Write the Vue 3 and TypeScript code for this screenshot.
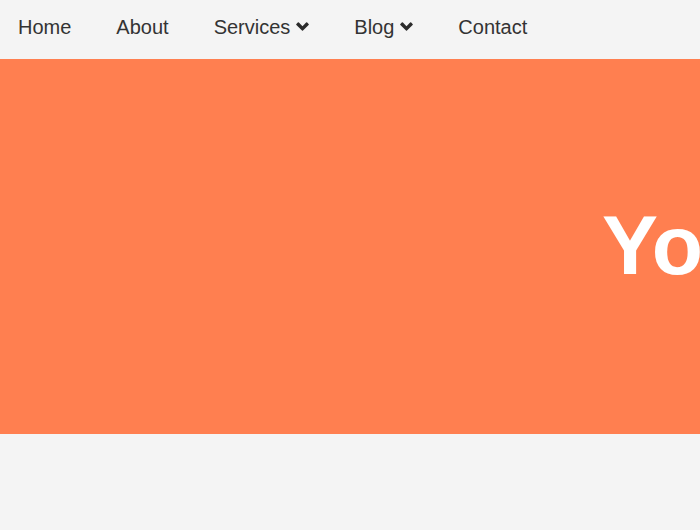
<script setup lang="ts">
interface NavItem {
  label: string
  hasMenu: boolean
}

const items: NavItem[] = [
  { label: 'Home', hasMenu: false },
  { label: 'About', hasMenu: false },
  { label: 'Services', hasMenu: true },
  { label: 'Blog', hasMenu: true },
  { label: 'Contact', hasMenu: false },
]
</script>

<template>
  <nav class="nav">
    <a v-for="item in items" :key="item.label" class="link" href="#">
      {{ item.label }}
      <svg v-if="item.hasMenu" class="chevron" viewBox="0 1 13 16" aria-hidden="true">
        <path d="M6 11.6.4 6a.8.8 0 0 1 0-1.1l1.4-1.4a.8.8 0 0 1 1.1 0L6.5 7.200l3.600-3.700a.8.8 0 0 1 1.100 0l1.400 1.400a.8.8 0 0 1 0 1.100L7 11.600a.8.8 0 0 1-1 0z" />
      </svg>
    </a>
  </nav>
  <header class="hero">
    <h1 class="title">Yo</h1>
  </header>
</template>

<style>
body {
  margin: 0;
  background: #f4f4f4;
}
</style>

<style scoped>
.nav {
  display: flex;
  gap: 45px;
  padding: 16px 18px 20px;
  font-family: "Liberation Sans", Arial, sans-serif;
  font-size: 20px;
  line-height: 23px;
}

.link {
  display: flex;
  align-items: center;
  gap: 6px;
  color: #333;
  text-decoration: none;
  white-space: nowrap;
}

.chevron {
  width: 13px;
  height: 16px;
  fill: #2b2b2b;
}

.hero {
  display: flex;
  align-items: center;
  box-sizing: border-box;
  min-height: 375px;
  padding: 0 0 4px 86%;
  overflow: hidden;
  background: #ff7f50;
}

.title {
  margin: 0;
  color: #fff;
  font-family: "Liberation Sans", Arial, sans-serif;
  font-size: 84px;
  font-weight: 700;
  line-height: 96px;
}
</style>
